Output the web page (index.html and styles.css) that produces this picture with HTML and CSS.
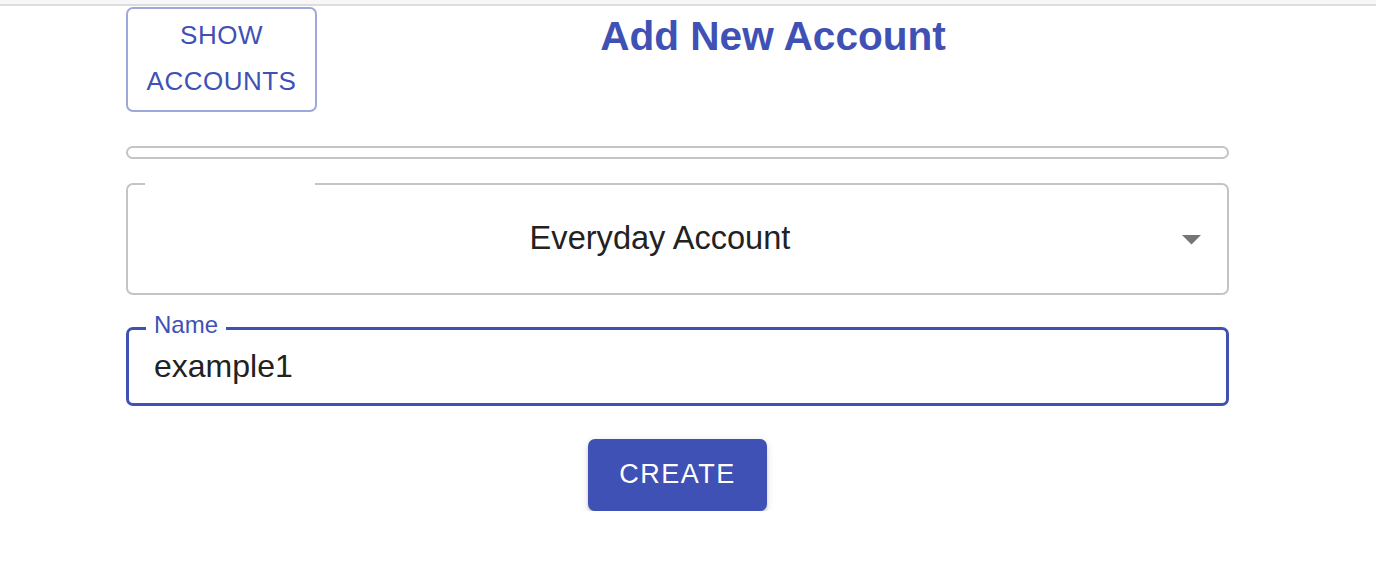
FILE: index.html
```html
<!DOCTYPE html>
<html lang="en">
<head>
<meta charset="utf-8">
<title>Add New Account</title>
<link rel="stylesheet" href="styles.css">
</head>
<body>
<div class="topbar"></div>
<main class="page">
  <div class="header">
    <button class="btn-outline" type="button"><span>SHOW</span><span>ACCOUNTS</span></button>
    <h1 class="title">Add New Account</h1>
  </div>
  <div class="empty-field"></div>
  <div class="select">
    <span class="notch notch-select"></span>
    <span class="select-value">Everyday Account</span>
    <svg class="select-arrow" width="19" height="10" viewBox="0 0 19 10"><polygon points="0,0 19,0 9.5,9.5" fill="#757575"/></svg>
  </div>
  <div class="text-field">
    <label class="field-label">Name</label>
    <span class="field-value">example1</span>
  </div>
  <div class="actions">
    <button class="btn-primary" type="button">CREATE</button>
  </div>
</main>
</body>
</html>
```
FILE: styles.css
```css
* { box-sizing: border-box; }
html, body { margin: 0; padding: 0; background: #fff; }
body { font-family: "Liberation Sans", Arial, sans-serif; }

.topbar {
  height: 6px;
  background: #f7f7f7;
  border-bottom: 2px solid #dddddd;
}

.page {
  margin-left: 126px;
  width: 1103px;
  padding-top: 1px;
}

.header {
  display: flex;
  align-items: flex-start;
}

.btn-outline {
  width: 191px;
  height: 105px;
  border: 2px solid #9fa8da;
  border-radius: 7px;
  background: #fff;
  color: #3f51b5;
  font-family: "Liberation Sans", Arial, sans-serif;
  font-size: 26px;
  letter-spacing: 0.5px;
  line-height: 46px;
  display: flex;
  flex-direction: column;
  align-items: center;
  justify-content: center;
  padding: 0 0 4px;
}

.title {
  flex: 1;
  margin: 5px 0 0;
  text-align: center;
  font-size: 40.6px;
  line-height: 48px;
  font-weight: bold;
  color: #3f51b5;
}

.empty-field {
  margin-top: 34px;
  height: 13px;
  border: 2px solid #c4c4c4;
  border-radius: 7px;
}

.select {
  position: relative;
  margin-top: 24px;
  height: 112px;
  border: 2px solid #c4c4c4;
  border-radius: 7px;
  display: flex;
  align-items: center;
  justify-content: center;
  padding: 0 63px 2px 28px;
}

.notch {
  position: absolute;
  top: -2px;
  height: 2px;
  background: #fff;
}
.notch-select { left: 17px; width: 170px; }

.select-value {
  font-size: 32.6px;
  color: #222;
}

.select-arrow {
  position: absolute;
  right: 26px;
  top: 50px;
}

.text-field {
  position: relative;
  margin-top: 32px;
  height: 79px;
  border: 3px solid #3f51b5;
  border-radius: 7px;
  display: flex;
  align-items: center;
  padding-left: 25px;
}

.field-label {
  position: absolute;
  left: 17px;
  top: -19px;
  padding: 0 8px;
  background: #fff;
  color: #3f51b5;
  font-size: 24px;
  line-height: 28px;
}

.field-value {
  font-size: 32px;
  color: #222;
}

.actions {
  display: flex;
  justify-content: center;
  margin-top: 33px;
}

.btn-primary {
  width: 179px;
  height: 72px;
  border: none;
  border-radius: 7px;
  background: #3f51b5;
  color: #fff;
  font-family: "Liberation Sans", Arial, sans-serif;
  font-size: 27px;
  letter-spacing: 1.5px;
  padding: 0 0 2px;
  box-shadow: 0 4px 2px -3px rgba(0,0,0,0.2), 0 3px 3px 0 rgba(0,0,0,0.14), 0 2px 8px 0 rgba(0,0,0,0.12);
}
```
